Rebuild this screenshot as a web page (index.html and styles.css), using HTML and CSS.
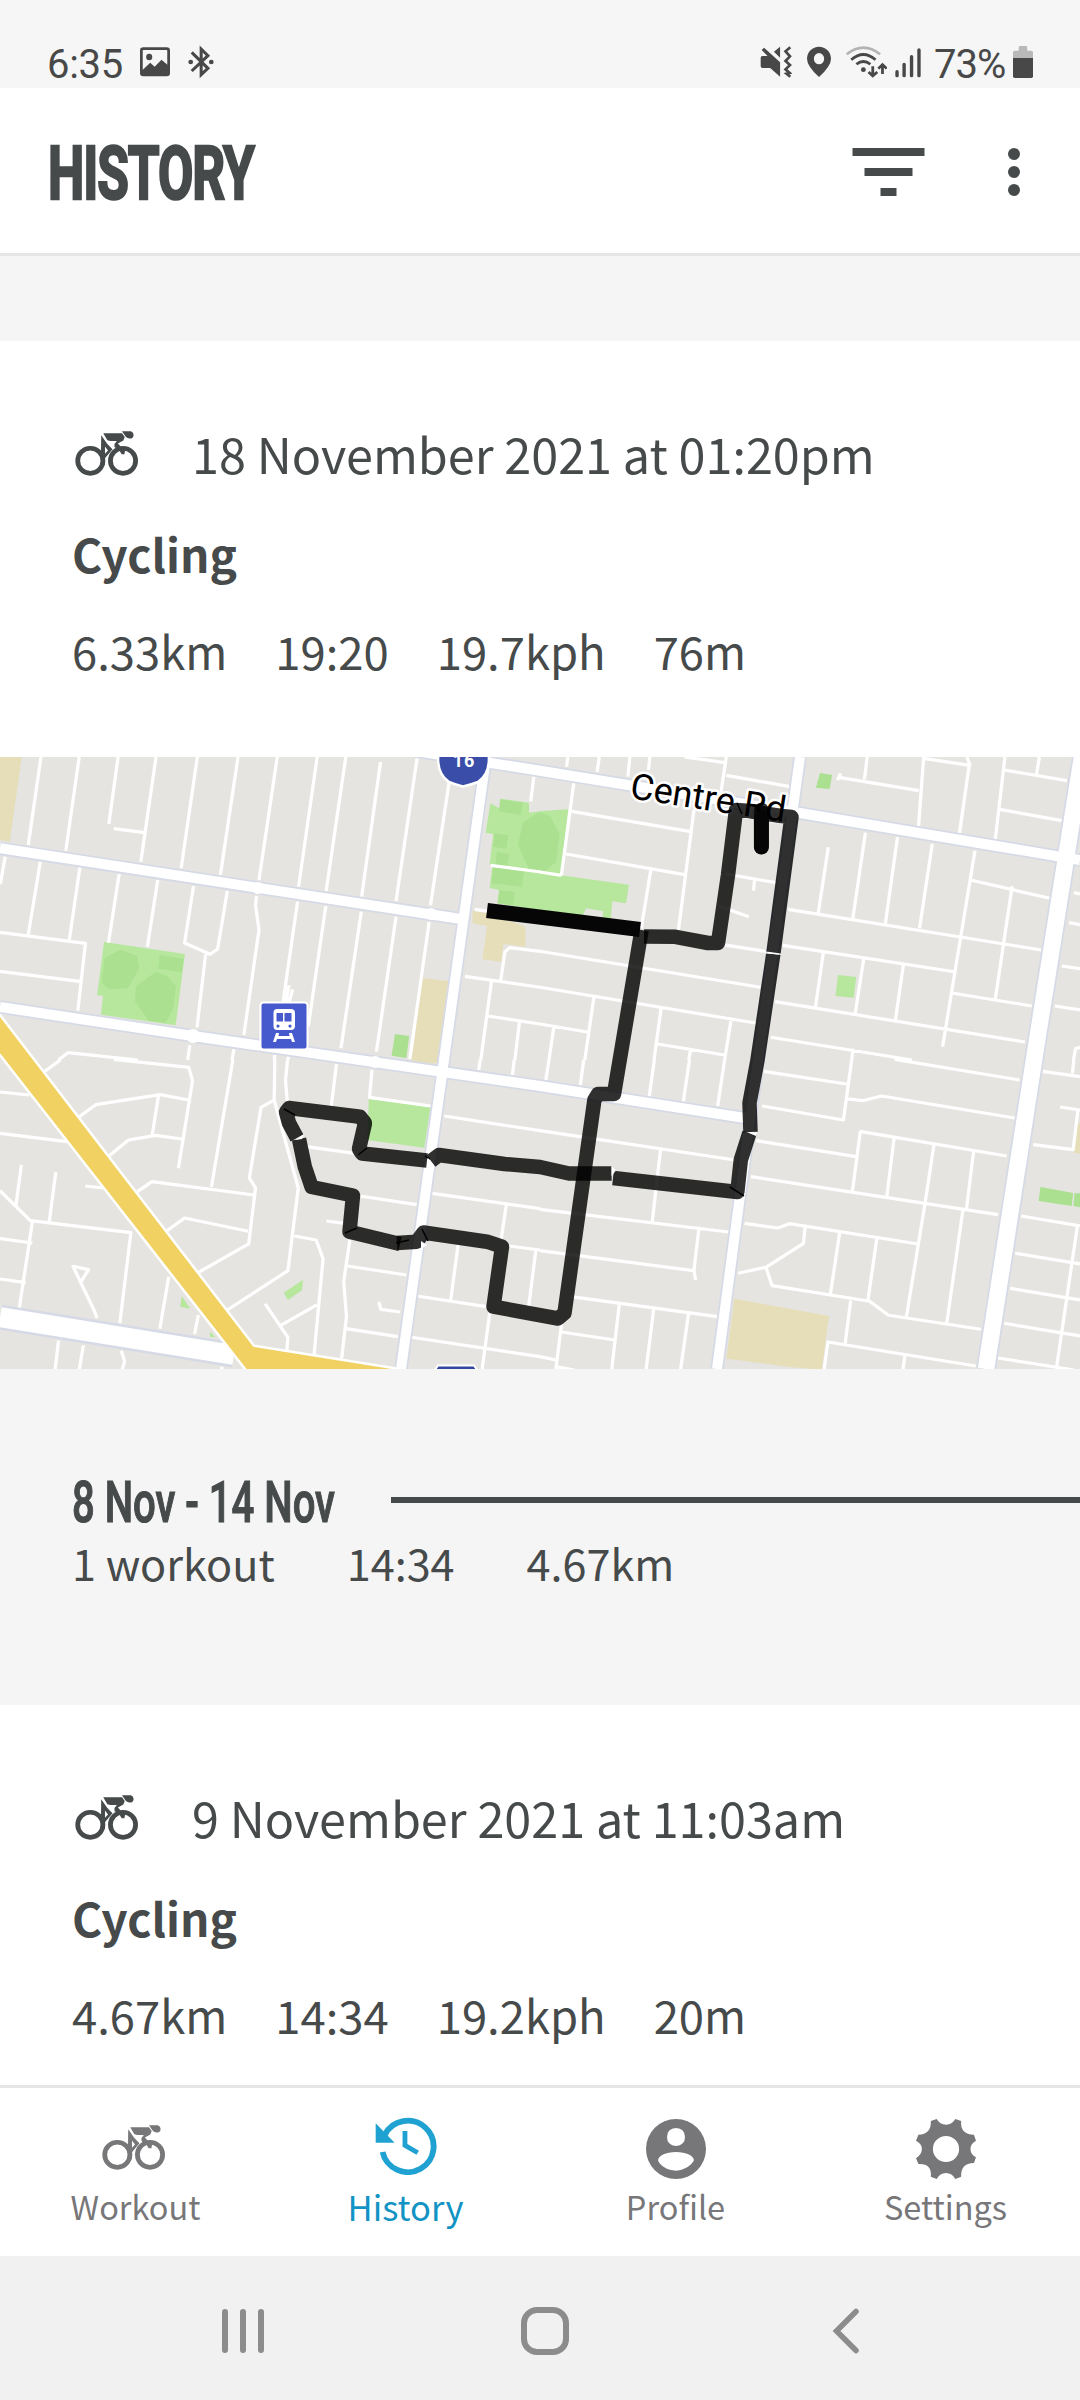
FILE: index.html
```html
<!DOCTYPE html>
<html lang="en">
<head>
<meta charset="utf-8">
<title>History</title>
<link rel="stylesheet" href="styles.css">
</head>
<body>
<svg class="defs" aria-hidden="true">
  <symbol id="bike" viewBox="295 164 185 136" preserveAspectRatio="none">
    <g fill="none" stroke="currentColor" stroke-width="14">
      <ellipse cx="340" cy="254" rx="37" ry="38"/>
      <ellipse cx="436" cy="254" rx="37" ry="38"/>
    </g>
    <path fill="currentColor" fill-rule="evenodd" d="M378 171H433L441 182L437 193L421 202L429 211L442 224L440 234L432 234L426 224L411 212V203L418 194H399L390 192ZM372 177L390 203L405 219L383 246V268L371 256ZM383 211V233L392 223Z"/>
    <path fill="currentColor" d="M433 165H459Q467 168 467 178Q465 187 456 187Q447 187 441 177Z"/>
  </symbol>
</svg>
<div class="screen">
  <header class="status">
    <div class="status-group">
      <span class="clock">6:35</span>
      <svg class="st-image" viewBox="406 135 88 105" preserveAspectRatio="none"><rect x="410" y="146" width="80" height="79" rx="6" fill="none" stroke="#484848" stroke-width="8"/><path d="M411 212L436 188L449 200L469 179L490 197V226H411Z" fill="#484848"/><ellipse cx="433" cy="171" rx="9" ry="10" fill="#484848"/></svg>
      <svg class="st-bt" viewBox="545 135 77 105" preserveAspectRatio="none"><path d="M556 157L604 205L584 224V147L604 167L556 213" fill="none" stroke="#484848" stroke-width="9"/><circle cx="553" cy="186" r="7" fill="#484848"/><circle cx="614" cy="186" r="7" fill="#484848"/></svg>
    </div>
    <div class="status-group">
      <svg class="st-mute" viewBox="638 135 94 105" preserveAspectRatio="none"><path d="M640 173Q640 168 645 168H660L643 150L650 143L697 187V230L668 204H645Q640 204 640 198ZM679 155L697 140V173Z" fill="#484848"/><path d="M727 142L713 154L726 169L713 183L726 195L713 208L725 219L716 221L727 230" fill="none" stroke="#484848" stroke-width="8"/></svg>
      <svg class="st-pin" viewBox="775 135 70 105" preserveAspectRatio="none"><path fill-rule="evenodd" fill="#484848" d="M810 231Q775 198 775 176A35 36 0 0 1 845 176Q845 198 810 231ZM810 159A15 17 0 1 0 810 193A15 17 0 1 0 810 159"/></svg>
      <svg class="st-wifi" viewBox="888 135 118 105" preserveAspectRatio="none"><g fill="none" stroke="#484848" stroke-width="8"><path d="M890 163Q938 123 986 163" stroke="#b3b3b3"/><path d="M903 179Q938 148 973 179M918 193Q938 176 958 193M965 199V227M953 216L965 228L978 216M993 222V193M981 206L993 194L1005 206"/></g><circle cx="938" cy="209" r="7" fill="#484848"/></svg>
      <svg class="st-signal" viewBox="1029 135 77 105" preserveAspectRatio="none"><g stroke="#484848" stroke-width="10" stroke-linecap="round"><path d="M1035 215V227M1056 193V227M1078 170V227M1100 150V227"/></g></svg>
      <span class="charge">73%</span>
      <svg class="st-battery" viewBox="1373 135 59 105" preserveAspectRatio="none"><path d="M1373 174V157Q1373 152 1378 152H1390V142Q1390 138 1394 138H1411Q1415 138 1415 142V152H1427Q1432 152 1432 157V174Z" fill="#b9b9b9"/><path d="M1373 174H1432V229Q1432 234 1427 234H1378Q1373 234 1373 229Z" fill="#484848"/></svg>
    </div>
  </header>

  <div class="titlebar">
    <h1><span>HISTORY</span></h1>
    <div class="actions">
      <svg width="73" height="50" viewBox="0 0 73 50"><path fill="#464a4a" d="M.5 0H72.500V8H.5ZM12.500 20H60.500V28H12.500ZM28.500 40H44.500V48H28.500Z"/></svg>
      <svg width="12" height="50" viewBox="0 0 12 50"><g fill="#464a4a"><circle cx="6" cy="6" r="6"/><circle cx="6" cy="24" r="6"/><circle cx="6" cy="42" r="6"/></g></svg>
    </div>
  </div>

  <main class="feed">
    <article class="workout">
      <div class="when"><svg class="bike"><use href="#bike"/></svg><span>18 November 2021 at 01:20pm</span></div>
      <h2>Cycling</h2>
      <div class="stats"><span>6.33km</span><span>19:20</span><span>19.7kph</span><span>76m</span></div>
    </article>

    <svg class="map" viewBox="0 0 1080 612">
      <!-- parks and built-up areas -->
      <g transform="translate(0,-7) scale(.3444,.3333)">
        <path class="sand" d="M0 0H66L28 275L0 270ZM1372 482L1420 490L1526 530V590L1462 582L1455 636L1401 628L1414 528L1372 520ZM1227 684L1303 694L1272 940H1193Z"/>
        <path class="park" d="M302 576L537 612L510 826L293 794L299 738L282 735ZM1424 160L1452 176V146L1536 158V188L1570 184V482L1444 460L1449 420L1422 414L1430 346L1422 342L1432 252L1410 248Z"/>
        <path class="park2" d="M350 599L398 617L404 656L371 714L317 718L295 698L304 624ZM464 615L533 626L528 667L459 656ZM453 665L486 678L511 708L502 780L480 818L432 812L392 754L395 708ZM1452 148L1518 158L1513 195L1449 184ZM1436 250L1476 256L1470 296L1432 290ZM1443 306L1478 312L1473 350L1439 344ZM1432 350L1522 364L1515 410L1427 400ZM1450 420L1494 426L1490 466L1445 460ZM1570 184L1518 218L1504 286L1535 356L1570 360ZM1147 852L1188 858L1180 924L1137 917Z"/>
      </g>
      <g transform="translate(540,-7) scale(.3444,.3333)">
        <path class="park" d="M-2 184L82 178L60 376L258 404L250 460L210 454L205 510L181 504L184 484L134 475L122 500L-2 482ZM865 675L918 681L911 743L858 738Z"/>
        <path class="park2" d="M-2 187L29 198L57 252L47 335L15 364L-2 360ZM813 69L848 75L841 117L801 113Z"/>
      </g>
      <g transform="translate(0,303) scale(.3444,.3333)">
        <path class="sand" d="M1197 0H1272V10Z"/>
        <path class="park" d="M1071 117L1250 142L1232 263L1066 240ZM824 698L880 659L877 691L836 720ZM528 708L552 746L523 740ZM611 815L625 832L609 830Z"/>
      </g>
      <g transform="translate(540,303) scale(.3444,.3333)">
        <path class="sand" d="M564 716L839 768L818 930L720 920L541 896ZM1560 190H1570V282L1550 278Z"/>
        <path class="park2" d="M1453 381L1548 399L1544 438L1448 423ZM1552 400H1570V442L1549 438Z"/>
      </g>

      <!-- side streets -->
      <g class="street" transform="translate(0,-7) scale(.3444,.3333)">
        <path d="M119 21L82 285M230 21L191 302M343 21L316 222M330 236L420 248M453 21L409 335M573 21L526 355M691 21L640 375M805 21L752 390M921 21L867 410M1004 21L947 423M1105 36L1050 440M1211 25L1150 453M1305 90L1250 466M1550 80L1541 154M1425 346L1570 366"/>
        <path d="M15 320L1 402M117 335L82 555M232 352L201 572M346 372L315 578M458 390L428 590M562 408L536 579L610 613L632 597L660 423M597 613L572 832M745 438L742 466L752 540L708 855M864 455L822 755M946 468L895 830M1049 485L990 895M1150 500L1093 905M1246 516L1190 927M831 755L839 706M840 755L850 718"/>
        <path d="M0 547L248 580L226 782M0 664L236 695M170 930L197 908L400 930M551 886L545 930M679 898L674 930M797 915V930M838 920L835 930M1378 478L1420 484M1350 679L1568 712M1568 604L1480 593L1466 606L1454 690M1427 695L1396 930M1417 798L1568 822M1508 818L1495 930"/>
      </g>
      <g class="street" transform="translate(540,-7) scale(.3444,.3333)">
        <path d="M81 21L77 50M172 21L166 66M261 21L255 80M319 21L315 60M420 21L537 38M541 21L522 150M541 76L725 110M98 100L62 376M0 366L62 376M92 184L438 245M447 180L402 540M76 312L420 374M322 358L294 535M0 604L640 712M0 712L630 820M157 738L130 930M0 822L137 846M40 832L26 930M352 772L331 930M342 882L540 916M555 808L536 930M437 900L432 930"/>
        <path d="M540 372L685 398M623 390L620 422M520 468L606 500M530 584L655 604M837 292L808 490M720 478L1455 600M945 248L908 508M1038 262L1003 520M1139 282L1102 535M1263 302L1169 890M1250 390L1480 445M1371 408L1322 748M705 586L1208 666M823 606L800 770M940 626L915 792M1055 646L1032 810M683 755L1408 876M1200 730L1428 768M670 862L1080 930M909 896L905 930"/>
        <path d="M864 90L873 70M868 82L1100 122M950 21L942 88M1114 21L1099 230M1118 26L1248 46L1240 21M1247 40L1218 250M1350 21L1322 268M1348 60L1530 92M1450 21L1442 72M1335 178L1515 212M1550 428L1568 432M1536 518L1568 524M1515 648L1568 656M1495 768L1568 780M1549 930L1555 896L1570 892"/>
      </g>
      <g class="street" transform="translate(0,303) scale(.3444,.3333)">
        <path d="M130 34L175 0M0 96L85 105M330 -2L548 22L559 62L518 325M548 120L465 104L278 134L230 170M460 108L442 225M528 237L452 226L373 240L312 292M676 0L614 380M0 220L195 245M62 315L46 438M0 392L88 482L380 518L348 790M162 336L143 486M248 378L300 384M94 486L56 744M0 536L94 549M0 657L75 668M282 775L275 755L212 619L257 629L236 664M399 395L441 365L738 405M485 512L536 474L720 514M798 0L796 120L866 384L836 632L660 750M796 120L758 142L724 354L742 384L722 552L575 638M835 0L829 60L834 125M490 650L464 806M576 765L565 822M170 842L160 930M242 856L230 930M352 872L362 905L354 930M644 920V930"/>
        <path d="M977 12L962 138M1080 30L1073 112L1250 138M1290 168L1568 212M1394 0L1390 30M1493 0L1488 45M890 260L1030 280M1045 408L1210 434M1255 400L1568 446M1470 435L1455 540M948 483L1000 490M855 528L918 540L938 596L912 885M920 735L815 796M770 732L836 832L833 870M1016 540L998 664L1006 770L992 895M1008 618L1180 645M1100 726L1106 748L1162 756M1005 806L1155 830M1195 832L1568 890M1330 555L1308 725M1215 709L1412 740M1422 758L1400 927M1478 558L1568 570M1556 570L1535 740"/>
      </g>
      <g class="street" transform="translate(540,303) scale(.3444,.3333)">
        <path d="M26 0L17 60M127 0L117 76M332 0L317 110M434 0L416 125M536 0L516 138M0 212L566 300M350 268L326 485M0 448L548 516M462 500L447 632L452 660M0 572L445 632M90 710L515 770M64 780L46 927M62 816L217 840M230 735L208 930M330 748L308 930M431 762L408 930M0 890L46 900M46 920L100 930"/>
        <path d="M650 34L890 72M905 0L881 180L645 138M888 116L936 122L992 108L1378 174M1030 -2L1392 60M628 242L918 290M930 214L907 395M928 214L1355 288M1028 235L1007 410M1144 254L1118 430L1064 770M1259 274L1238 450M612 350L1330 464M1228 450L1181 790M594 490L690 504L724 491L1098 552M770 500L765 550L656 622L575 640M656 622L674 677L957 724L1012 766L1280 808M870 518L843 704M978 536L952 722M902 722L886 852M825 927L836 846L1265 918M1060 882L1054 930"/>
        <path d="M1460 34L1568 50M1550 0L1546 40M1510 141L1568 150M1562 150L1548 269L1432 254M1397 468L1568 498M1560 500L1500 922M1380 580L1568 612M1365 685L1568 720M1348 790L1568 828M1330 894L1550 930"/>
      </g>

      <!-- main roads: casing below, surface above -->
      <g class="casing">
        <path d="M0 91.300L461 162M0 250L193 279L540 329L745 361M416 -6L489 5.700L540 13.700L800 56L1080 103M486 0L444 303L401 612M800 0L758 303L717 612" stroke-width="13.500"/>
        <path d="M1082 0L1034 303L986 612" stroke-width="20"/>
        <path d="M0 560L234 598" stroke-width="25"/>
      </g>
      <g class="road">
        <path d="M0 91.300L461 162M0 250L193 279L540 329L745 361M416 -6L489 5.700L540 13.700L800 56L1080 103M486 0L444 303L401 612M800 0L758 303L717 612" stroke-width="10"/>
        <path d="M1082 0L1034 303L986 612" stroke-width="16.500"/>
        <path d="M0 560L234 598" stroke-width="20"/>
      </g>
      <g fill="#fff"><circle cx="193" cy="279" r="7"/><circle cx="258" cy="131" r="6"/><circle cx="431" cy="157" r="6"/><circle cx="375" cy="305" r="6"/></g>
      <path class="highway" d="M-4 254L0 258L254 588.700L399.500 612L395 620H250L245 612L0 298L-4 294Z"/>

      <!-- route shield and station -->
      <path d="M438.500 -4H488.500Q491 16 478 25Q470 28 463 29.500Q456 28 449 25Q436 16 438.500 -4Z" fill="#3a4da8" stroke="#fff" stroke-width="2.500"/>
      <text class="shield" x="464" y="9.500" text-anchor="middle">16</text>
      <path d="M434 614L438 608.500H474L478 614Z" fill="#34479f" stroke="#fff" stroke-width="2"/>
      <rect x="260.500" y="245.500" width="47" height="47" rx="3" fill="#4659cd" stroke="#fff" stroke-width="2"/>
      <path fill="#fff" fill-rule="evenodd" d="M277 252H291Q295 252 295 256V269Q295 273 291 273H277Q273.500 273 273.500 269V256Q273.500 252 277 252ZM276.500 256V264.500H283V256ZM284.500 256V264.500H291.500V256ZM278 267.500A1.600 1.600 0 1 0 278 270.700A1.600 1.600 0 1 0 278 267.500M290 267.500A1.600 1.600 0 1 0 290 270.700A1.600 1.600 0 1 0 290 267.500M276 276H279L278.500 279H289.500L289 276H292L295 285H292L291 282H277L276 285H273Z"/>
      <text class="place" x="0" y="0" textLength="157" transform="translate(629,41) rotate(8.800)">Centre Rd</text>

      <!-- recorded ride -->
      <g class="ride">
        <path d="M644 179.500L674 179.700L708 186H718L728 118L736 53L746 53.700L781 59L791.500 60L773.500 195.500"/>
        <path d="M773.300 197L757.500 303L749.500 346L750.500 375"/>
        <path d="M749.400 376L740.800 403L737.300 435L613 421"/>
        <path d="M611.600 416.500L569 416.500L540 410L504.500 407L439 398L431 404"/>
        <path d="M427 403.500L362 396.500L359 392L365 366L360 359.700L289 351L286 355L289 366L297 381"/>
        <path d="M299 382L304.800 409.700L311.600 430L353 438.500L349.500 474.700L400 487"/>
        <path d="M397 486L416.700 484.700L423.500 475.500L487 484.700L502 489.700L493.500 549.700L558 561.500L564.500 556L594.400 343L598 337H614L641.600 173"/>
        <path d="M761.400 53V90" stroke-linecap="round"/>
      </g>
      <path class="pass" d="M487 153.500L640 172.500"/>
      <path class="pass" d="M761.400 62V90" stroke-linecap="round"/>
      <path class="joint" d="M737 46L742 57M284 352L295 358M358 398L367 391M345 476L357 471M730 430L744 439M396 486L409 483M422 472L428 484M425 399L430 402"/>
      <path fill="#fff" d="M427 413L428 401L435 410ZM421 492V484L427 488ZM295 383L304 377L302 382ZM766 195.500L779 196.500V197.500L766 196.500ZM748 375.500H757L756 379ZM611.500 409V419L616 413.500Z"/>
    </svg>

    <section class="week">
      <div class="week-head"><h3><span>8 Nov - 14 Nov</span></h3><i></i></div>
      <div class="week-stats"><span>1 workout</span><span>14:34</span><span>4.67km</span></div>
    </section>

    <article class="workout last">
      <div class="when"><svg class="bike"><use href="#bike"/></svg><span>9 November 2021 at 11:03am</span></div>
      <h2>Cycling</h2>
      <div class="stats"><span>4.67km</span><span>14:34</span><span>19.2kph</span><span>20m</span></div>
    </article>
  </main>

  <nav class="tabs">
    <a class="tab"><svg class="bike"><use href="#bike"/></svg><span>Workout</span></a>
    <a class="tab active"><svg width="62" height="60" viewBox="1090 138 180 180" preserveAspectRatio="none"><path d="M1118 198A75 77 0 1 1 1112 249" fill="none" stroke="#1fa2d2" stroke-width="17"/><path d="M1092 163L1147 221H1092Z" fill="#1fa2d2"/><path d="M1177 186V229L1214 251" fill="none" stroke="#1fa2d2" stroke-width="14"/></svg><span>History</span></a>
    <a class="tab"><svg width="60" height="60" viewBox="308 147 174 180" preserveAspectRatio="none"><path fill="#777779" fill-rule="evenodd" d="M395 147A87 90 0 1 0 395 327A87 90 0 1 0 395 147ZM395 174Q421 176 421 201Q421 226 395 228Q369 226 369 201Q369 176 395 174ZM395 246C425 246 447 258 447 271C443 283 420 302 395 302C370 302 347 286 343 271C343 258 365 246 395 246Z"/></svg><span>Profile</span></a>
    <a class="tab"><svg width="60" height="60" viewBox="1089 147 174 180" preserveAspectRatio="none"><path fill="#777779" fill-rule="evenodd" d="M1132 153L1149 147Q1158 164 1176 164Q1194 164 1203 147L1220 153Q1216 193 1257 194L1263 212Q1247 221 1247 237Q1247 253 1263 262L1257 279Q1218 280 1220 320L1203 327Q1194 309 1176 309Q1158 309 1149 327L1132 320Q1136 280 1096 282L1089 265Q1106 253 1106 237Q1106 221 1089 212L1096 194Q1134 193 1132 153ZM1176 198A38 39 0 1 0 1176 276A38 39 0 1 0 1176 198Z"/></svg><span>Settings</span></a>
  </nav>

  <footer class="system">
    <svg width="44" height="48" viewBox="0 0 44 48"><path d="M4 5V43M22 5V43M40 5V43" stroke="#8c8c8c" stroke-width="6" stroke-linecap="round"/></svg>
    <svg width="48" height="48" viewBox="0 0 48 48"><rect x="3" y="3" width="42" height="42" rx="13" fill="none" stroke="#8c8c8c" stroke-width="6"/></svg>
    <svg width="28" height="48" viewBox="0 0 28 48"><path d="M24 4.500L4.500 24L24 43.500" fill="none" stroke="#8c8c8c" stroke-width="5.500" stroke-linecap="round"/></svg>
  </footer>
</div>
</body>
</html>
```
FILE: styles.css
```css
* { box-sizing: border-box; }
body {
  margin: 0;
  background: #fff;
  color: #464a4a;
  font-family: "Noto Sans CJK SC", "Open Sans", sans-serif;
}
h1, h2, h3 { margin: 0; }
svg { display: block; flex: none; }
.defs { position: absolute; width: 0; height: 0; }
.screen {
  width: 1080px;
  height: 2400px;
  display: flex;
  flex-direction: column;
  overflow: hidden;
}

/* status bar */
.status {
  height: 88px;
  flex: none;
  padding: 45px 47px 0 47px;
  display: flex;
  justify-content: space-between;
  background: #f6f6f6;
  color: #484848;
  font: 40px/39px Roboto, sans-serif;
}
.status-group { display: flex; align-items: flex-start; }
.status svg { height: 35px; }
.clock { width: 93px; letter-spacing: -0.3px; }
.st-image { width: 30px; margin-right: 18px; }
.st-bt { width: 26px; }
.st-mute { width: 32px; margin-right: 15px; }
.st-pin { width: 24px; margin-right: 15px; }
.st-wifi { width: 41px; margin-right: 8px; }
.st-signal { width: 26px; margin-right: 13px; }
.charge { width: 79px; letter-spacing: -1px; white-space: nowrap; }
.st-battery { width: 20px; }

/* title bar */
.titlebar {
  height: 168px;
  flex: none;
  padding: 0 60px 0 48px;
  display: flex;
  align-items: center;
  justify-content: space-between;
  border-bottom: 3px solid #e5e7e6;
}
.titlebar h1 {
  width: 210px;
  padding-top: 4px;
  font: 700 75px/90px Roboto, sans-serif;
  letter-spacing: -1.5px;
  -webkit-text-stroke: 2.5px #464a4a;
}
.titlebar h1 span, .week h3 span {
  display: inline-block;
  white-space: nowrap;
  transform-origin: 0 50%;
}
.titlebar h1 span { transform: scaleX(0.685); }
.actions { display: flex; gap: 83px; padding-top: 5px; }

/* feed */
.feed {
  height: 1829px;
  flex: none;
  padding-top: 85px;
  background: #f5f5f5;
  overflow: hidden;
}
.workout {
  height: 416px;
  padding: 82px 72px 0;
  display: flex;
  flex-direction: column;
  background: #fff;
  line-height: 60px;
}
.bike { width: 63px; height: 45px; }
.when {
  display: flex;
  gap: 54px;
  padding-left: 3px;
  font-size: 48.5px;
  margin-bottom: 40px;
}
.when .bike { margin-top: 8px; }
.workout h2 { font-size: 46px; font-weight: 700; line-height: 60px; margin-bottom: 37px; }
.stats { display: flex; gap: 48px; font-size: 45.4px; }

/* map */
.map { width: 1080px; height: 612px; background: #e5e4e0; }
.sand { fill: #e6deb9; }
.park { fill: #b6e79d; }
.park2 { fill: #aae08f; }
.street path { fill: none; stroke: #fff; stroke-width: 9.500px; stroke-linecap: butt; stroke-linejoin: round; }
.casing path, .road path { fill: none; stroke-linejoin: round; }
.casing { stroke: #d6dae6; }
.road { stroke: #fff; }
.highway { fill: #f0d162; stroke: #fff; stroke-width: 2.500px; }
.shield { font: 700 18px Roboto, sans-serif; fill: #fff; letter-spacing: 1px; }
.place {
  font: 36px Roboto, sans-serif;
  fill: #000;
  stroke: #fff;
  stroke-width: 5px;
  stroke-linejoin: round;
  paint-order: stroke;
}
.ride path { fill: none; stroke: rgba(0, 0, 0, 0.81); stroke-width: 14.500px; stroke-linejoin: round; }
.pass { fill: none; stroke: #060606; stroke-width: 15px; }
.joint { fill: none; stroke: #000; stroke-width: 1.500px; }

/* weekly summary */
.week { height: 336px; padding: 102px 0 0 72px; }
.week-head { display: flex; align-items: center; height: 61px; }
.week h3 {
  width: 319px;
  font: 500 58px/60px Roboto, sans-serif;
  -webkit-text-stroke: 1.2px #464a4a;
}
.week h3 span { transform: scaleX(0.69); }
.week-head i { flex: 1; height: 6px; background: #464a4a; margin-bottom: 3px; }
.week-stats { display: flex; gap: 72px; font-size: 43.2px; line-height: 60px; }

/* bottom navigation */
.tabs {
  height: 171px;
  flex: none;
  border-top: 3px solid #e5e7e6;
  display: grid;
  grid-template-columns: repeat(4, 1fr);
}
.tab {
  display: flex;
  flex-direction: column;
  align-items: center;
  padding: 31px 0 0 1px;
  color: #777779;
  font-size: 32.5px;
  line-height: 44px;
}
.tab svg { margin-bottom: 5px; }
.tab .bike { margin: 6px 4px 14px 0; }
.tab.active { color: #1193c4; font-size: 34.6px; padding-top: 27px; }
.tab.active svg { margin: 0 0 9px 1px; }

/* system buttons */
.system {
  flex: 1;
  background: #f1f1f1;
  display: grid;
  grid-template-columns: 300px 311px auto;
  align-items: center;
  justify-content: start;
  padding: 6px 0 0 221px;
}
```
